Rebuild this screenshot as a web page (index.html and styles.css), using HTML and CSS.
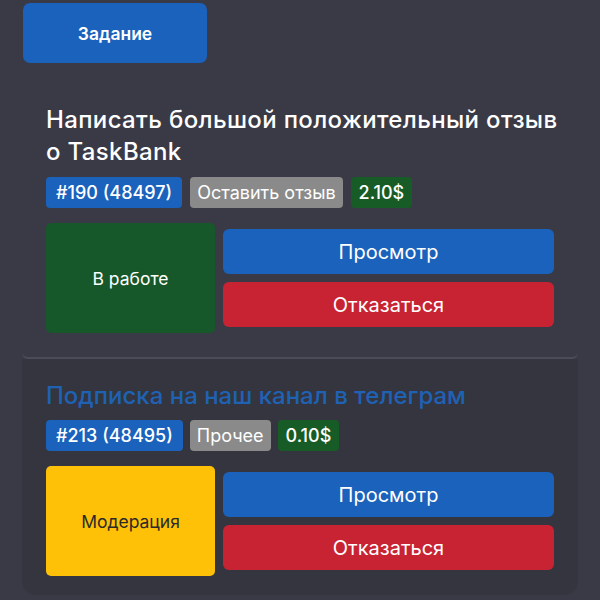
FILE: index.html
```html
<!DOCTYPE html>
<html lang="ru">
<head>
<meta charset="utf-8">
<title>Задания</title>
<link rel="stylesheet" href="styles.css">
</head>
<body>
  <button class="tab-btn">Задание</button>

  <section class="task task-first">
    <h2 class="task-title task-title-main">Написать большой положительный отзыв о&nbsp;TaskBank</h2>
    <div class="badges">
      <span class="badge badge-id">#190 (48497)</span>
      <span class="badge badge-type">Оставить отзыв</span>
      <span class="badge badge-price">2.10$</span>
    </div>
    <div class="actions">
      <div class="status status-work">В работе</div>
      <div class="buttons">
        <button class="btn btn-view">Просмотр</button>
        <button class="btn btn-refuse">Отказаться</button>
      </div>
    </div>
  </section>

  <section class="task task-second">
    <h2 class="task-title task-title-link">Подписка на наш канал в телеграм</h2>
    <div class="badges">
      <span class="badge badge-id">#213 (48495)</span>
      <span class="badge badge-type">Прочее</span>
      <span class="badge badge-price">0.10$</span>
    </div>
    <div class="actions">
      <div class="status status-moderation">Модерация</div>
      <div class="buttons">
        <button class="btn btn-view">Просмотр</button>
        <button class="btn btn-refuse">Отказаться</button>
      </div>
    </div>
  </section>
</body>
</html>
```
FILE: styles.css
```css
* { box-sizing: border-box; }

html, body {
  margin: 0;
  background: #3a3a46;
  font-family: Inter, "Noto Sans", sans-serif;
  color: #fff;
}

body {
  padding: 3px 22px 0;
}

.tab-btn {
  display: block;
  width: 184px;
  height: 60px;
  margin-left: 1px;
  border: 0;
  border-radius: 7px;
  background: #1a62bb;
  color: #fff;
  font: 600 17.5px Inter, sans-serif;
}

.task {
  padding: 0 24px 24px;
}

.task-first {
  padding-top: 41px;
  border-bottom: 2px solid #4b4c57;
  border-radius: 0 0 6px 6px;
}

.task-second {
  background: #34353f;
  padding-top: 21px;
  padding-bottom: 19px;
  border-radius: 0 0 14px 14px;
}

.task-title {
  margin: 0;
  font-size: 24px;
  font-weight: 450;
  line-height: 32px;
  letter-spacing: 0;
  color: #fff;
}

.task-title-main {
  letter-spacing: 0.35px;
  margin-right: -16px;
}

.task-title-link {
  color: #1f62b4;
}

.badges {
  display: flex;
  gap: 7px;
  margin-top: 8px;
}

.task-first .badges {
  gap: 8px;
  margin-top: 9px;
}

.badge {
  height: 31px;
  padding: 0 8px;
  border-radius: 4px;
  font-size: 18px;
  line-height: 31px;
  font-weight: 500;
  white-space: nowrap;
}

.badge-id { background: #1a62bb; padding: 0 10px; }
.badge-type { background: #8a8a8a; font-weight: 400; padding: 0 7px; }
.badge-price { background: #175c26; }

.actions {
  display: grid;
  grid-template-columns: 169px 1fr;
  gap: 8px;
  margin-top: 15px;
}

.status {
  height: 110px;
  border-radius: 5px;
  display: flex;
  align-items: center;
  justify-content: center;
  font-size: 17.5px;
}

.status-work { background: #17582a; color: #fff; }
.status-moderation { background: #ffc107; color: #2a2a2a; }

.buttons {
  display: flex;
  flex-direction: column;
  gap: 8px;
  padding: 6px 0;
}

.btn {
  height: 45px;
  border: 0;
  border-radius: 6px;
  color: #fff;
  font: 400 20px Inter, sans-serif;
}

.btn-view { background: #1a62bb; }
.btn-refuse { background: #c82333; }
```
